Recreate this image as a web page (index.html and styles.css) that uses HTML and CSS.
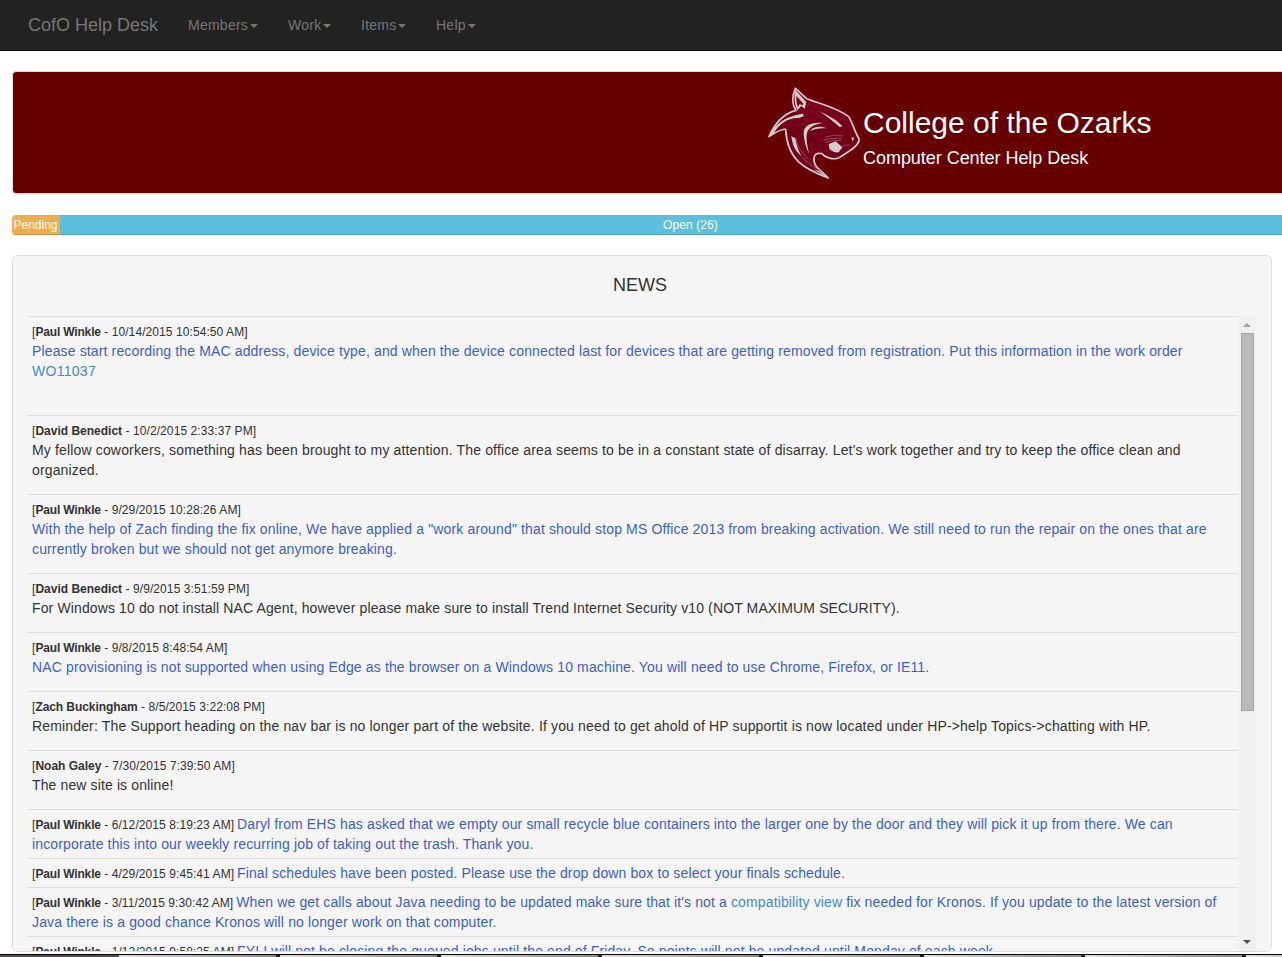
FILE: index.html
```
<!DOCTYPE html>
<html lang="en">
<head>
<meta charset="utf-8">
<title>CofO Help Desk</title>
<link rel="stylesheet" href="styles.css">
</head>
<body>
<nav class="navbar">
  <a class="brand">CofO Help Desk</a>
  <a class="nav-item">Members<i class="caret"></i></a>
  <a class="nav-item work">Work<i class="caret"></i></a>
  <a class="nav-item items">Items<i class="caret"></i></a>
  <a class="nav-item help">Help<i class="caret"></i></a>
</nav>
<header class="banner">
  <svg class="logo" viewBox="0 0 330 330">
    <defs>
      <linearGradient id="fur" x1="0" y1="0" x2="0" y2="1"><stop offset="0" stop-color="#850024"/><stop offset=".5" stop-color="#700014"/><stop offset="1" stop-color="#780020"/></linearGradient>
      <filter id="soft" x="-20%" y="-20%" width="140%" height="140%"><feGaussianBlur stdDeviation="5"/></filter>
    </defs>
    <path class="halo" filter="url(#soft)" d="M106 35 L141 67 C180 80 230 92 266 120 C276 132 286 165 299 188 C302 209 276 225 245 240 C230 258 201 249 184 233 C154 226 160 258 169 272 L207 307 C133 278 82 253 77 160 C64 158 49 167 25 184 C42 147 69 113 108 103 C93 81 98 55 106 35Z"/>
    <path class="face" d="M106 37 L140 68 C180 84 230 94 266 122 C276 134 282 165 297 188 C300 205 276 222 245 240 C230 254 201 249 186 233 C154 226 160 258 169 272 L205 306 C133 278 82 253 77 160 C64 158 49 167 27 182 C42 147 69 113 108 103 C93 81 98 55 106 37Z"/>
    <path class="white" d="M106 42 L139 78 L134 98 L124 90 L112 103 C103 82 101 62 106 42Z"/>
    <path class="cut" d="M110 60 L130 83 L127 88 L119 84 L114 93 C109 81 108 70 110 60Z"/>
    <path class="white" d="M27 182 C45 146 72 120 130 113 L131 121 L117 126 C84 124 57 145 40 173Z M181 107 C207 119 231 132 248 151 L239 153 C217 134 198 119 181 107Z M187 141 C158 137 129 147 131 174 C132 194 138 216 148 234 C141 208 138 188 141 172 C145 155 160 146 187 141Z M148 166 C161 150 181 149 202 157 C181 155 164 158 148 166Z M94 181 C98 211 107 227 125 241 C113 220 109 203 106 186Z M206 204 L227 196 L247 214 L236 229 C224 230 215 226 208 218Z"/>
    <path class="outline" d="M106 37 L140 68 C180 84 230 94 266 122 C276 134 282 165 297 188 C300 205 276 222 245 240 C230 254 201 249 186 233 C154 226 160 258 169 272 L205 306 C133 278 82 253 77 160 C64 158 49 167 27 182 C42 147 69 113 108 103 C93 81 98 55 106 37Z"/>
    <path class="whisker" d="M194 184 Q220 174 250 180 M190 192 Q220 184 247 188 M195 200 Q220 189 245 194 M270 207 Q252 206 247 213 M125 243 Q150 270 185 286 M108 187 Q112 218 145 250"/>
    <path class="white" d="M274 184 L283 185 L278 197Z M176 284 L205 306 L160 280Z"/>
  </svg>
  <div class="titles"><h1>College of the Ozarks</h1><h2>Computer Center Help Desk</h2></div>
</header>
<div class="progress"><div class="pending">Pending</div><div class="open">Open (26)</div></div>
<section class="news">
  <h3>NEWS</h3>
  <div class="scroller">
    <div class="list">
      <article class="tall blue"><small>[<b class="paul">Paul Winkle</b> - 10/14/2015 10:54:50 AM]</small><br><span>Please start recording the MAC address, device type, and when the device connected last for devices that are getting removed from registration. Put this information in the work order</span><br><a class="order">WO11037</a></article>
      <article class="para"><small>[<b>David Benedict</b> - 10/2/2015 2:33:37 PM]</small><br><span class="loose">My fellow coworkers, something has been brought to my attention. The office area seems to be in a constant state of disarray. Let's work together and try to keep the office clean and</span><br><span>organized.</span></article>
      <article class="para blue"><small>[<b class="paul">Paul Winkle</b> - 9/29/2015 10:28:26 AM]</small><br><span>With the help of Zach finding the fix online, We have applied a "work around" that should stop MS Office 2013 from breaking activation. We still need to run the repair on the ones that are</span><br><span>currently broken but we should not get anymore breaking.</span></article>
      <article class="para"><small>[<b>David Benedict</b> - 9/9/2015 3:51:59 PM]</small><br><span class="tight">For Windows 10 do not install NAC Agent, however please make sure to install Trend Internet Security v10 (NOT MAXIMUM SECURITY).</span></article>
      <article class="para blue"><small>[<b class="paul">Paul Winkle</b> - 9/8/2015 8:48:54 AM]</small><br><span>NAC provisioning is not supported when using Edge as the browser on a Windows 10 machine. You will need to use Chrome, Firefox, or IE11.</span></article>
      <article class="para"><small>[<b class="zach">Zach Buckingham</b> - 8/5/2015 3:22:08 PM]</small><br><span class="loose">Reminder: The Support heading on the nav bar is no longer part of the website. If you need to get ahold of HP supportit is now located under HP-&gt;help Topics-&gt;chatting with HP.</span></article>
      <article class="para"><small>[<b>Noah Galey</b> - 7/30/2015 7:39:50 AM]</small><br><span class="tight">The new site is online!</span></article>
      <article class="blue"><small>[<b class="paul">Paul Winkle</b> - 6/12/2015 8:19:23 AM]</small> <span class="tight">Daryl from EHS has asked that we empty our small recycle blue containers into the larger one by the door and they will pick it up from there. We can</span><br><span>incorporate this into our weekly recurring job of taking out the trash. Thank you.</span></article>
      <article class="blue"><small>[<b class="paul">Paul Winkle</b> - 4/29/2015 9:45:41 AM]</small> <span class="tight">Final schedules have been posted. Please use the drop down box to select your finals schedule.</span></article>
      <article class="blue"><small>[<b class="paul">Paul Winkle</b> - 3/11/2015 9:30:42 AM]</small> <span class="tight">When we get calls about Java needing to be updated make sure that it's not a <a>compatibility view</a> fix needed for Kronos. If you update to the latest version of</span><br><span>Java there is a good chance Kronos will no longer work on that computer.</span></article>
      <article class="blue"><small>[<b class="paul">Paul Winkle</b> - 1/12/2015 9:58:25 AM]</small> <span class="tight">FYI I will not be closing the queued jobs until the end of Friday. So points will not be updated until Monday of each week.</span></article>
    </div>
    <div class="scrollbar"><i class="up"></i><div class="thumb"></div><i class="down"></i></div>
  </div>
</section>
<footer class="taskbar"><i class="start"></i><i class="task"></i><i class="task"></i><i class="task"></i><i class="task"></i><i class="task"></i><i class="task"></i><i class="task"></i><i class="task"></i></footer>
</body>
</html>
```
FILE: styles.css
```
* { box-sizing: border-box; }
body { margin: 0; height: 957px; overflow: hidden; background: #fff; color: #333; font: 14px/20px "Liberation Sans", Arial, sans-serif; display: flex; flex-direction: column; }
.navbar { height: 51px; flex: none; background: #222; border-bottom: 1px solid #080808; display: flex; align-items: center; color: #777; padding-left: 28px; }
.brand { font-size: 18px; width: 160px; }
.nav-item { display: flex; align-items: center; width: 100px; letter-spacing: .25px; }
.nav-item.work { width: 73px; }
.nav-item.items { width: 75px; }
.caret { border: 4px solid transparent; border-top-color: #777; border-bottom: 0; margin: 2px 0 0 2px; }
.banner { flex: none; margin: 20px 0 0 12px; height: 123px; width: 1300px; background: #600; border: 1px solid #ddd; border-radius: 4px; box-shadow: 0 1px 1px rgba(0,0,0,.08); display: flex; padding: 4px 0 0 747px; color: #fff; }
.logo { width: 110px; height: 110px; flex: none; }
.halo { fill: #880030; stroke: #880030; stroke-width: 8; opacity: .55; }
.face { fill: url(#fur); }
.outline { fill: none; stroke: #d2cccc; stroke-width: 5; stroke-linejoin: round; }
.white { fill: #d2cccc; }
.cut { fill: #800020; }
.whisker { fill: none; stroke: #a36b75; stroke-width: 2; }
.titles { margin-left: -7px; padding-top: 30px; }
h1, h2, h3 { margin: 0; font-weight: 400; }
h1 { font-size: 30px; line-height: 33px; }
h2 { font-size: 18px; line-height: 20px; margin-top: 9px; letter-spacing: -.04px; }
.progress { flex: none; margin: 21px 0 0 12px; height: 20px; width: 1310px; display: flex; font-size: 12px; color: #fff; text-align: center; border-radius: 4px; overflow: hidden; }
.progress div { box-shadow: inset 0 -1px 0 rgba(0,0,0,.15); }
.pending { width: 48px; padding-right: 1px; background: #f0ad4e; }
.open { width: 1262px; padding-right: 1px; letter-spacing: .1px; background: #5bc0de; }
.news { flex: none; margin: 20px 10px 0 12px; height: 697px; border: 1px solid #ddd; border-radius: 6px; background: #f5f5f5; padding: 18px 15px 0; display: flex; flex-direction: column; overflow: hidden; }
h3 { font-size: 18px; line-height: 22px; text-align: center; height: 42px; flex: none; padding-right: 4px; }
.scroller { display: flex; flex: 1; min-height: 0; overflow: hidden; }
.list { width: 1210px; white-space: nowrap; }
article { border-top: 1px solid #ddd; padding: 4px; }
article.para { padding-bottom: 14px; }
article.tall { padding-bottom: 34px; }
article span { color: #333; letter-spacing: .139px; }
article span.loose { letter-spacing: .154px; }
article span.tight { letter-spacing: .125px; }
article.blue span { color: #3c5fcb; }
article a { color: #428bca; }
article .order { letter-spacing: .28px; }
small { font-size: 12px; line-height: 1; letter-spacing: .08px; margin-right: -1px; }
small b { letter-spacing: 0; }
small .paul { letter-spacing: -.17px; }
small .zach { letter-spacing: -.08px; }
.scrollbar { margin-left: 1px; width: 17px; background: #f0f0f0; display: flex; flex-direction: column; align-items: center; padding: 7px 0 7px; }
.up { border: 4px solid transparent; border-bottom-color: #a0a0a0; border-top: 0; margin-right: 1px; }
.thumb { width: 13px; height: 378px; margin-top: 6px; background: #bababa; border: 1px solid #a6a6a6; }
.down { margin: auto 1px 0 0; border: 4px solid transparent; border-top-color: #505050; border-bottom: 0; }
.taskbar { flex: none; height: 3px; margin-top: 2px; border-top: 1px solid #000; background: #555; display: flex; overflow: hidden; }
.start { flex: none; width: 119px; background: #5b4a54; }
.task { flex: none; width: 161px; border-right: 4px solid #222; background: linear-gradient(90deg, #ddd, #888); }
```
